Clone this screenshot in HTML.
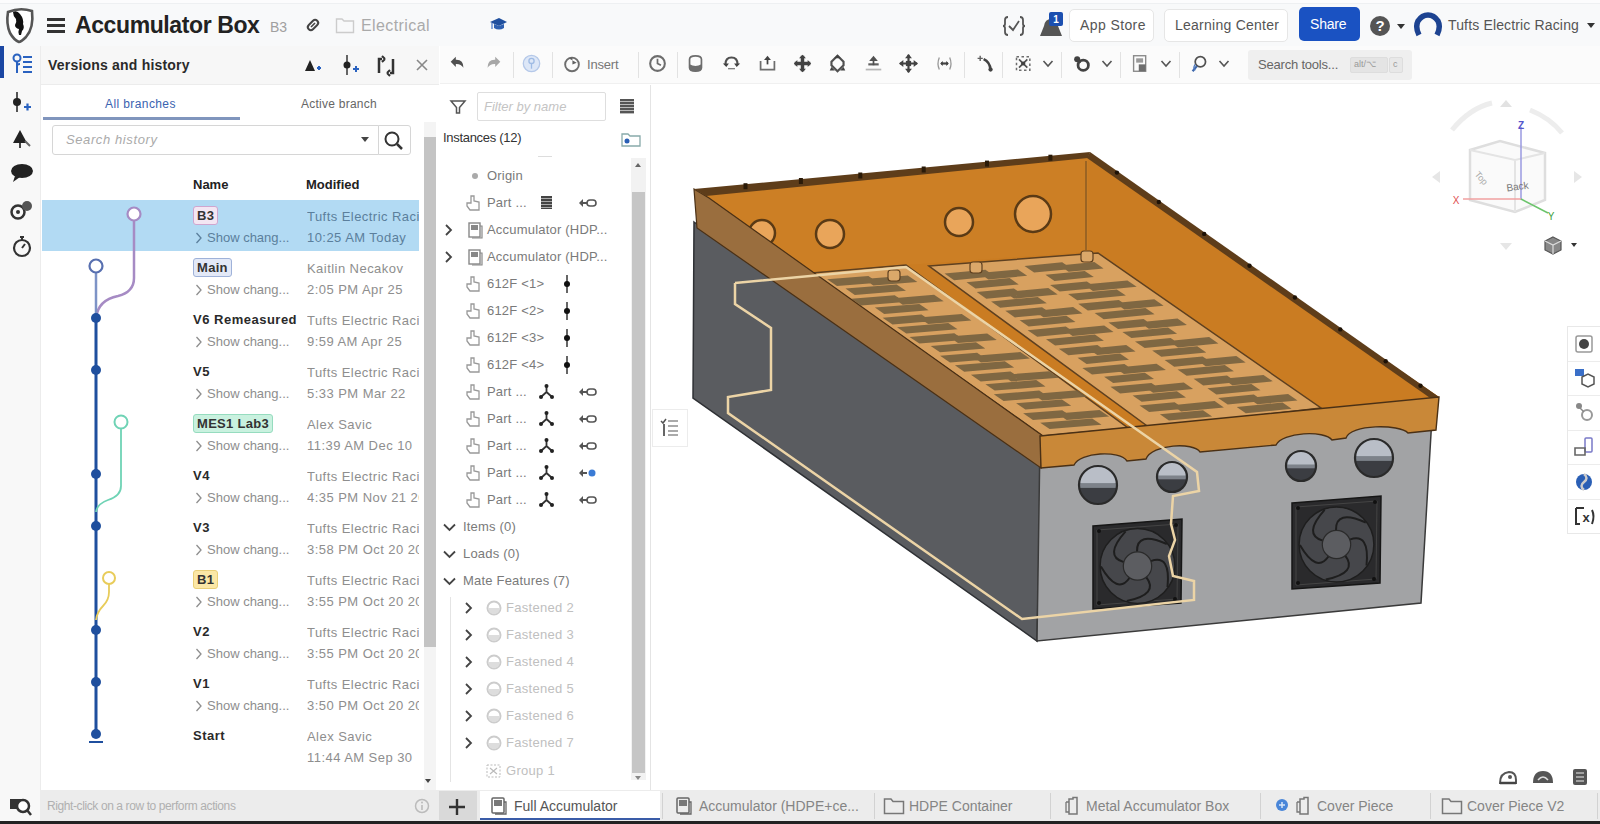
<!DOCTYPE html>
<html><head><meta charset="utf-8">
<style>
*{box-sizing:border-box;margin:0;padding:0}
html,body{width:1600px;height:824px;overflow:hidden;background:#fff;font-family:"Liberation Sans",sans-serif;color:#333}
.a{position:absolute}
#top{left:0;top:0;width:1600px;height:46px;background:#f8f9fa;border-top:3px solid #fcfcfd;box-shadow:inset 0 1px 0 #eef0f2}
#strip{left:0;top:46px;width:41px;height:775px;background:#f8f8f8;border-right:1px solid #ececec}
#lp{left:41px;top:46px;width:398px;height:744px;background:#fff}
#lphead{left:41px;top:46px;width:398px;height:39px;background:#f7f7f7;border-bottom:1px solid #ececec}
#tb{left:440px;top:46px;width:1160px;height:38px;background:#fbfbfb;border-bottom:1px solid #f0f0f0}
#inst{left:442px;top:85px;width:209px;height:705px;background:#fff;border-right:1px solid #e4e4e4}
#foot{left:41px;top:790px;width:1559px;height:31px;background:#ececec}
#blk{left:0;top:821px;width:1600px;height:3px;background:#222}
.t{position:absolute;white-space:nowrap}
</style></head><body>
<div id="top" class="a"></div>
<div id="strip" class="a"></div>
<div id="lp" class="a"></div>
<div id="lphead" class="a"></div>
<div id="tb" class="a"></div>
<div id="inst" class="a"></div>
<div id="foot" class="a"></div>
<div id="blk" class="a"></div>

<!-- top bar content -->
<svg class="a" style="left:0;top:0" width="45" height="46" viewBox="0 0 45 46"><path d="M8,12 Q20,7 32,11 Q34,28 26,37 Q21,42 19,42 Q14,40 10,33 Q6,24 8,12 Z" fill="#fff" stroke="#555" stroke-width="2.6"/><path d="M13,12 Q17,10 20,14 Q24,19 23,24 Q25,28 22,31 L21,35 L19,35 Q18,31 19,29 Q15,28 15,25 Q17,22 16,19 Q13,16 13,12 Z" fill="#111"/></svg>
<div class="a" style="left:47px;top:18px;width:18px;height:3px;background:#333"></div>
<div class="a" style="left:47px;top:24px;width:18px;height:3px;background:#333"></div>
<div class="a" style="left:47px;top:30px;width:18px;height:3px;background:#333"></div>
<div class="t" style="left:75px;top:12px;font-size:23px;font-weight:bold;color:#222;letter-spacing:-0.4px">Accumulator Box</div>
<div class="t" style="left:270px;top:19px;font-size:14px;color:#a0a0a0">B3</div>
<svg class="a" style="left:304px;top:16px" width="18" height="18" viewBox="0 0 18 18"><rect x="3" y="6" width="12" height="6" rx="3" transform="rotate(-45 9 9)" fill="none" stroke="#444" stroke-width="2"/><line x1="7" y1="11" x2="11" y2="7" stroke="#444" stroke-width="1.6"/></svg>
<svg class="a" style="left:335px;top:17px" width="20" height="17" viewBox="0 0 20 17"><path d="M1.5,2 L7,2 L9,4 L18.5,4 L18.5,15.5 L1.5,15.5 Z" fill="none" stroke="#ccc" stroke-width="1.4"/></svg>
<div class="t" style="left:361px;top:17px;font-size:16px;color:#aaa;letter-spacing:0.4px">Electrical</div>
<svg class="a" style="left:488px;top:16px" width="20" height="16" viewBox="0 0 20 16"><path d="M2,6 L11,2 L19,6 L11,10 Z" fill="#1f4f9e"/><path d="M6,8 L6,12 Q11,15 16,12 L16,8 L11,10 Z" fill="#2d5fb0"/><line x1="4" y1="7" x2="4" y2="13" stroke="#6a8fd0" stroke-width="1.5"/></svg>
<svg class="a" style="left:1002px;top:15px" width="24" height="22" viewBox="0 0 24 22"><path d="M6,2 Q3,2 3,5 L3,9 Q3,11 1,11 Q3,11 3,13 L3,17 Q3,20 6,20 M18,2 Q21,2 21,5 L21,9 Q21,11 23,11 Q21,11 21,13 L21,17 Q21,20 18,20" fill="none" stroke="#555" stroke-width="1.8"/><path d="M7,11 L11,15 L17,6" fill="none" stroke="#555" stroke-width="1.8"/></svg>
<svg class="a" style="left:1036px;top:10px" width="30" height="28" viewBox="0 0 30 28"><path d="M4,26 L8,16 Q9,9 15,9 Q21,9 22,16 L26,26 Z" fill="#555"/><rect x="13" y="2" width="14" height="14" rx="2" fill="#1b4fb0"/><text x="20" y="13" font-size="10" fill="#fff" text-anchor="middle" font-family="Liberation Sans" font-weight="bold">1</text></svg>
<div class="a" style="left:1069px;top:9px;width:85px;height:33px;border:1px solid #e6e6e6;border-radius:5px;background:#fff"></div>
<div class="t" style="left:1080px;top:17px;font-size:14px;color:#555;letter-spacing:0.4px">App Store</div>
<div class="a" style="left:1164px;top:9px;width:124px;height:33px;border:1px solid #e6e6e6;border-radius:5px;background:#fff"></div>
<div class="t" style="left:1175px;top:17px;font-size:14px;color:#555;letter-spacing:0.25px">Learning Center</div>
<div class="a" style="left:1299px;top:7px;width:61px;height:34px;border-radius:5px;background:#1a52c2"></div>
<div class="t" style="left:1310px;top:16px;font-size:14px;color:#fff;letter-spacing:-0.2px">Share</div>
<svg class="a" style="left:1369px;top:15px" width="22" height="22" viewBox="0 0 22 22"><circle cx="11" cy="11" r="10" fill="#555"/><text x="11" y="16" font-size="15" font-weight="bold" fill="#fff" text-anchor="middle" font-family="Liberation Sans">?</text></svg>
<div class="a" style="left:1397px;top:24px;width:0;height:0;border-left:4px solid transparent;border-right:4px solid transparent;border-top:5px solid #333"></div>
<svg class="a" style="left:1413px;top:12px" width="30" height="26" viewBox="0 0 30 26"><path d="M6,23 Q2,15 5,9 Q9,3 15,3 Q21,3 25,9 Q28,15 24,23" fill="none" stroke="#1d4391" stroke-width="5.5" stroke-linecap="butt"/></svg>
<div class="t" style="left:1448px;top:17px;font-size:14px;color:#555;letter-spacing:0.15px">Tufts Electric Racing</div>
<div class="a" style="left:1587px;top:23px;width:0;height:0;border-left:4px solid transparent;border-right:4px solid transparent;border-top:5px solid #333"></div>

<!-- left panel header -->
<div class="t" style="left:48px;top:57px;font-size:14px;font-weight:bold;color:#2a2a2a;letter-spacing:0.2px">Versions and history</div>
<div class="t" style="left:105px;top:97px;font-size:12px;color:#3a63b0;letter-spacing:0.4px">All branches</div>
<div class="t" style="left:301px;top:97px;font-size:12px;color:#666;letter-spacing:0.25px">Active branch</div>
<div class="a" style="left:43px;top:117px;width:197px;height:3px;background:#8095bd"></div>


<!-- left panel body -->
<div class="a" style="left:52px;top:125px;width:327px;height:30px;border:1px solid #d6d6d6;border-radius:3px 0 0 3px;background:#fff"></div>
<div class="t" style="left:66px;top:132px;font-size:13px;font-style:italic;color:#aaa;letter-spacing:0.6px">Search history</div>
<div class="a" style="left:361px;top:137px;width:0;height:0;border-left:4px solid transparent;border-right:4px solid transparent;border-top:5px solid #444"></div>
<div class="a" style="left:378px;top:125px;width:33px;height:30px;border:1px solid #d6d6d6;border-radius:0 3px 3px 0;background:#fff"></div>
<svg class="a" style="left:383px;top:130px" width="22" height="22" viewBox="0 0 22 22"><circle cx="9" cy="9" r="6.5" fill="none" stroke="#333" stroke-width="2"/><line x1="14" y1="14" x2="19" y2="19" stroke="#333" stroke-width="2.5"/></svg>
<div class="t" style="left:193px;top:177px;font-size:13px;font-weight:bold;color:#222">Name</div>
<div class="t" style="left:306px;top:177px;font-size:13px;font-weight:bold;color:#222">Modified</div>
<div class="a" style="left:424px;top:122px;width:12px;height:668px;background:#f4f4f4"></div><div class="a" style="left:425px;top:779px;width:0;height:0;border-left:3.5px solid transparent;border-right:3.5px solid transparent;border-top:4px solid #444"></div>
<div class="a" style="left:424px;top:137px;width:12px;height:510px;background:#c4c4c4"></div>
<div class="a" style="left:42px;top:200px;width:377px;height:51px;background:#b2daf3"></div>
<div class="t" style="left:193px;top:206px;height:19px;padding:0 3px;line-height:18px;font-size:13px;font-weight:bold;color:#333;letter-spacing:0.3px;background:#f3e6f3;border:1px solid #cfa6cf;border-radius:3px">B3</div>
<svg class="a" style="left:195px;top:232px" width="8" height="12" viewBox="0 0 8 12"><path d="M1.5,1 L6,6 L1.5,11" fill="none" stroke="#5b7f9c" stroke-width="1.3"/></svg>
<div class="t" style="left:207px;top:230px;font-size:13px;color:#5b7f9c">Show chang...</div>
<div class="t" style="left:307px;top:209px;width:112px;overflow:hidden;font-size:13px;letter-spacing:0.45px;color:#5b7f9c">Tufts Electric Racing</div>
<div class="t" style="left:307px;top:230px;width:112px;overflow:hidden;font-size:13px;letter-spacing:0.45px;color:#5b7f9c">10:25 AM Today</div>
<div class="t" style="left:193px;top:258px;height:19px;padding:0 3px;line-height:18px;font-size:13px;font-weight:bold;color:#333;letter-spacing:0.3px;background:#e3e9f7;border:1px solid #9fb2d9;border-radius:3px">Main</div>
<svg class="a" style="left:195px;top:284px" width="8" height="12" viewBox="0 0 8 12"><path d="M1.5,1 L6,6 L1.5,11" fill="none" stroke="#8e8e8e" stroke-width="1.3"/></svg>
<div class="t" style="left:207px;top:282px;font-size:13px;color:#8e8e8e">Show chang...</div>
<div class="t" style="left:307px;top:261px;width:112px;overflow:hidden;font-size:13px;letter-spacing:0.45px;color:#8e8e8e">Kaitlin Necakov</div>
<div class="t" style="left:307px;top:282px;width:112px;overflow:hidden;font-size:13px;letter-spacing:0.45px;color:#8e8e8e">2:05 PM Apr 25</div>
<div class="t" style="left:193px;top:312px;font-size:13px;font-weight:bold;color:#2a2a2a;letter-spacing:0.5px">V6 Remeasured</div>
<svg class="a" style="left:195px;top:336px" width="8" height="12" viewBox="0 0 8 12"><path d="M1.5,1 L6,6 L1.5,11" fill="none" stroke="#8e8e8e" stroke-width="1.3"/></svg>
<div class="t" style="left:207px;top:334px;font-size:13px;color:#8e8e8e">Show chang...</div>
<div class="t" style="left:307px;top:313px;width:112px;overflow:hidden;font-size:13px;letter-spacing:0.45px;color:#8e8e8e">Tufts Electric Racing</div>
<div class="t" style="left:307px;top:334px;width:112px;overflow:hidden;font-size:13px;letter-spacing:0.45px;color:#8e8e8e">9:59 AM Apr 25</div>
<div class="t" style="left:193px;top:364px;font-size:13px;font-weight:bold;color:#2a2a2a;letter-spacing:0.5px">V5</div>
<svg class="a" style="left:195px;top:388px" width="8" height="12" viewBox="0 0 8 12"><path d="M1.5,1 L6,6 L1.5,11" fill="none" stroke="#8e8e8e" stroke-width="1.3"/></svg>
<div class="t" style="left:207px;top:386px;font-size:13px;color:#8e8e8e">Show chang...</div>
<div class="t" style="left:307px;top:365px;width:112px;overflow:hidden;font-size:13px;letter-spacing:0.45px;color:#8e8e8e">Tufts Electric Racing</div>
<div class="t" style="left:307px;top:386px;width:112px;overflow:hidden;font-size:13px;letter-spacing:0.45px;color:#8e8e8e">5:33 PM Mar 22</div>
<div class="t" style="left:193px;top:414px;height:19px;padding:0 3px;line-height:18px;font-size:13px;font-weight:bold;color:#333;letter-spacing:0.3px;background:#c9f1df;border:1px solid #96dcbf;border-radius:3px">MES1 Lab3</div>
<svg class="a" style="left:195px;top:440px" width="8" height="12" viewBox="0 0 8 12"><path d="M1.5,1 L6,6 L1.5,11" fill="none" stroke="#8e8e8e" stroke-width="1.3"/></svg>
<div class="t" style="left:207px;top:438px;font-size:13px;color:#8e8e8e">Show chang...</div>
<div class="t" style="left:307px;top:417px;width:112px;overflow:hidden;font-size:13px;letter-spacing:0.45px;color:#8e8e8e">Alex Savic</div>
<div class="t" style="left:307px;top:438px;width:112px;overflow:hidden;font-size:13px;letter-spacing:0.45px;color:#8e8e8e">11:39 AM Dec 10</div>
<div class="t" style="left:193px;top:468px;font-size:13px;font-weight:bold;color:#2a2a2a;letter-spacing:0.5px">V4</div>
<svg class="a" style="left:195px;top:492px" width="8" height="12" viewBox="0 0 8 12"><path d="M1.5,1 L6,6 L1.5,11" fill="none" stroke="#8e8e8e" stroke-width="1.3"/></svg>
<div class="t" style="left:207px;top:490px;font-size:13px;color:#8e8e8e">Show chang...</div>
<div class="t" style="left:307px;top:469px;width:112px;overflow:hidden;font-size:13px;letter-spacing:0.45px;color:#8e8e8e">Tufts Electric Racing</div>
<div class="t" style="left:307px;top:490px;width:112px;overflow:hidden;font-size:13px;letter-spacing:0.45px;color:#8e8e8e">4:35 PM Nov 21 2023</div>
<div class="t" style="left:193px;top:520px;font-size:13px;font-weight:bold;color:#2a2a2a;letter-spacing:0.5px">V3</div>
<svg class="a" style="left:195px;top:544px" width="8" height="12" viewBox="0 0 8 12"><path d="M1.5,1 L6,6 L1.5,11" fill="none" stroke="#8e8e8e" stroke-width="1.3"/></svg>
<div class="t" style="left:207px;top:542px;font-size:13px;color:#8e8e8e">Show chang...</div>
<div class="t" style="left:307px;top:521px;width:112px;overflow:hidden;font-size:13px;letter-spacing:0.45px;color:#8e8e8e">Tufts Electric Racing</div>
<div class="t" style="left:307px;top:542px;width:112px;overflow:hidden;font-size:13px;letter-spacing:0.45px;color:#8e8e8e">3:58 PM Oct 20 2023</div>
<div class="t" style="left:193px;top:570px;height:19px;padding:0 3px;line-height:18px;font-size:13px;font-weight:bold;color:#333;letter-spacing:0.3px;background:#fbe7a6;border:1px solid #e9cf78;border-radius:3px">B1</div>
<svg class="a" style="left:195px;top:596px" width="8" height="12" viewBox="0 0 8 12"><path d="M1.5,1 L6,6 L1.5,11" fill="none" stroke="#8e8e8e" stroke-width="1.3"/></svg>
<div class="t" style="left:207px;top:594px;font-size:13px;color:#8e8e8e">Show chang...</div>
<div class="t" style="left:307px;top:573px;width:112px;overflow:hidden;font-size:13px;letter-spacing:0.45px;color:#8e8e8e">Tufts Electric Racing</div>
<div class="t" style="left:307px;top:594px;width:112px;overflow:hidden;font-size:13px;letter-spacing:0.45px;color:#8e8e8e">3:55 PM Oct 20 2023</div>
<div class="t" style="left:193px;top:624px;font-size:13px;font-weight:bold;color:#2a2a2a;letter-spacing:0.5px">V2</div>
<svg class="a" style="left:195px;top:648px" width="8" height="12" viewBox="0 0 8 12"><path d="M1.5,1 L6,6 L1.5,11" fill="none" stroke="#8e8e8e" stroke-width="1.3"/></svg>
<div class="t" style="left:207px;top:646px;font-size:13px;color:#8e8e8e">Show chang...</div>
<div class="t" style="left:307px;top:625px;width:112px;overflow:hidden;font-size:13px;letter-spacing:0.45px;color:#8e8e8e">Tufts Electric Racing</div>
<div class="t" style="left:307px;top:646px;width:112px;overflow:hidden;font-size:13px;letter-spacing:0.45px;color:#8e8e8e">3:55 PM Oct 20 2023</div>
<div class="t" style="left:193px;top:676px;font-size:13px;font-weight:bold;color:#2a2a2a;letter-spacing:0.5px">V1</div>
<svg class="a" style="left:195px;top:700px" width="8" height="12" viewBox="0 0 8 12"><path d="M1.5,1 L6,6 L1.5,11" fill="none" stroke="#8e8e8e" stroke-width="1.3"/></svg>
<div class="t" style="left:207px;top:698px;font-size:13px;color:#8e8e8e">Show chang...</div>
<div class="t" style="left:307px;top:677px;width:112px;overflow:hidden;font-size:13px;letter-spacing:0.45px;color:#8e8e8e">Tufts Electric Racing</div>
<div class="t" style="left:307px;top:698px;width:112px;overflow:hidden;font-size:13px;letter-spacing:0.45px;color:#8e8e8e">3:50 PM Oct 20 2023</div>
<div class="t" style="left:193px;top:728px;font-size:13px;font-weight:bold;color:#2a2a2a;letter-spacing:0.5px">Start</div>
<div class="t" style="left:307px;top:729px;width:112px;overflow:hidden;font-size:13px;letter-spacing:0.45px;color:#8e8e8e">Alex Savic</div>
<div class="t" style="left:307px;top:750px;width:112px;overflow:hidden;font-size:13px;letter-spacing:0.45px;color:#8e8e8e">11:44 AM Sep 30</div>
<svg class="a" style="left:0;top:0" width="440" height="790" viewBox="0 0 440 790">
<path d="M134,220 L134,278 Q134,292 118,296 Q98,300 96,318" fill="none" stroke="#a68bc4" stroke-width="2.5"/>
<line x1="96" y1="272" x2="96" y2="318" stroke="#7d93c6" stroke-width="2.5"/>
<line x1="96" y1="318" x2="96" y2="737" stroke="#1f4f9e" stroke-width="3"/>
<path d="M121,428 L121,486 Q121,496 108,500 Q97,504 96,512" fill="none" stroke="#6fd3b5" stroke-width="1.8"/>
<path d="M109,584 L109,592 Q109,600 103,606 Q97,612 96,620" fill="none" stroke="#e8cc5a" stroke-width="1.8"/>
<circle cx="134" cy="214" r="6.5" fill="#fff" stroke="#a68bc4" stroke-width="2.2"/>
<circle cx="96" cy="266" r="6.5" fill="#fff" stroke="#5870b0" stroke-width="2.2"/>
<circle cx="121" cy="422" r="6.5" fill="#fff" stroke="#6fd3b5" stroke-width="2"/>
<circle cx="109" cy="578" r="6" fill="#fff" stroke="#e8cc5a" stroke-width="2"/>
<g fill="#1f4f9e">
<circle cx="96" cy="318" r="5"/><circle cx="96" cy="370" r="5"/><circle cx="96" cy="474" r="5"/><circle cx="96" cy="526" r="5"/><circle cx="96" cy="630" r="5"/><circle cx="96" cy="682" r="5"/><circle cx="96" cy="734" r="5"/>
</g>
<line x1="89" y1="742" x2="103" y2="742" stroke="#1f4f9e" stroke-width="2"/>
</svg>


<!-- instances header -->
<svg class="a" style="left:449px;top:98px" width="18" height="18" viewBox="0 0 18 18"><path d="M2,3 L16,3 L10.5,9.5 L10.5,15 L7.5,15 L7.5,9.5 Z" fill="none" stroke="#555" stroke-width="1.5"/></svg>
<div class="a" style="left:477px;top:92px;width:129px;height:29px;border:1px solid #dedede;border-radius:2px;background:#fff"></div>
<div class="t" style="left:484px;top:99px;font-size:13px;font-style:italic;color:#c4c4c4">Filter by name</div>
<div class="a" style="left:620px;top:99px;width:14px;height:15px;background:repeating-linear-gradient(#555 0 2px,#bbb 2px 3px)"></div>
<div class="t" style="left:443px;top:130px;font-size:13px;color:#333;letter-spacing:-0.3px">Instances (12)</div>
<svg class="a" style="left:620px;top:130px" width="22" height="18" viewBox="0 0 22 18"><path d="M2,4 L8,4 L10,6 L20,6 L20,16 L2,16 Z" fill="none" stroke="#8aa" stroke-width="1.3"/><circle cx="7" cy="11" r="2.5" fill="#2a5fb5"/></svg>
<div class="a" style="left:538px;top:156px;width:14px;height:1px;background:#ddd"></div>
<div class="a" style="left:631px;top:158px;width:15px;height:622px;background:#f2f2f2"></div>
<div class="a" style="left:632px;top:192px;width:13px;height:581px;background:#c6c6c6"></div>
<div class="a" style="left:635px;top:163px;width:0;height:0;border-left:3.5px solid transparent;border-right:3.5px solid transparent;border-bottom:4px solid #666"></div>
<div class="a" style="left:635px;top:776px;width:0;height:0;border-left:3.5px solid transparent;border-right:3.5px solid transparent;border-top:4px solid #888"></div>
<div class="a" style="left:450px;top:597px;width:1px;height:185px;background:#e4e4e4"></div>
<div class="a" style="left:472px;top:173px;width:6px;height:6px;border-radius:3px;background:#aaa"></div><div class="t" style="left:487px;top:168px;font-size:13px;color:#7a7a7a;letter-spacing:0.2px">Origin</div>
<svg class="a" style="left:465px;top:194px" width="18" height="18" viewBox="0 0 18 18"><path d="M6,2 L9,2 L9,7 L14,8 L14,16 L5,16 L2,12 L2,9 L6,9 Z" fill="none" stroke="#999" stroke-width="1.3"/></svg><div class="t" style="left:487px;top:195px;font-size:13px;color:#7a7a7a;letter-spacing:0.2px">Part ...</div><div class="a" style="left:541px;top:196px;width:11px;height:13px;background:repeating-linear-gradient(#444 0 2px,#aaa 2px 3px)"></div><svg class="a" style="left:578px;top:198px" width="20" height="10" viewBox="0 0 20 10"><path d="M1,5 L5,1 L5,9 Z" fill="#555"/><path d="M5,5 L9,5" stroke="#555" stroke-width="2"/><rect x="9" y="2" width="9" height="6" rx="3" fill="none" stroke="#555" stroke-width="1.6"/></svg>
<svg class="a" style="left:444px;top:224px" width="10" height="12" viewBox="0 0 10 12"><path d="M2,1 L7,6 L2,11" fill="none" stroke="#444" stroke-width="1.8"/></svg><svg class="a" style="left:467px;top:221px" width="17" height="18" viewBox="0 0 17 18"><rect x="2" y="2" width="11" height="14" fill="none" stroke="#888" stroke-width="1.4"/><rect x="4" y="4" width="7" height="5" fill="#888"/><path d="M13,5 L15,5 L15,17 L5,17" fill="none" stroke="#888" stroke-width="1.2"/></svg><div class="t" style="left:487px;top:222px;font-size:13px;color:#7a7a7a;letter-spacing:0.2px">Accumulator (HDP...</div>
<svg class="a" style="left:444px;top:251px" width="10" height="12" viewBox="0 0 10 12"><path d="M2,1 L7,6 L2,11" fill="none" stroke="#444" stroke-width="1.8"/></svg><svg class="a" style="left:467px;top:248px" width="17" height="18" viewBox="0 0 17 18"><rect x="2" y="2" width="11" height="14" fill="none" stroke="#888" stroke-width="1.4"/><rect x="4" y="4" width="7" height="5" fill="#888"/><path d="M13,5 L15,5 L15,17 L5,17" fill="none" stroke="#888" stroke-width="1.2"/></svg><div class="t" style="left:487px;top:249px;font-size:13px;color:#7a7a7a;letter-spacing:0.2px">Accumulator (HDP...</div>
<svg class="a" style="left:465px;top:275px" width="18" height="18" viewBox="0 0 18 18"><path d="M6,2 L9,2 L9,7 L14,8 L14,16 L5,16 L2,12 L2,9 L6,9 Z" fill="none" stroke="#999" stroke-width="1.3"/></svg><div class="t" style="left:487px;top:276px;font-size:13px;color:#7a7a7a;letter-spacing:0.2px">612F &lt;1&gt;</div><svg class="a" style="left:562px;top:274px" width="10" height="20" viewBox="0 0 10 20"><line x1="5" y1="1" x2="5" y2="19" stroke="#333" stroke-width="1.5"/><circle cx="5" cy="10" r="3" fill="#111"/></svg>
<svg class="a" style="left:465px;top:302px" width="18" height="18" viewBox="0 0 18 18"><path d="M6,2 L9,2 L9,7 L14,8 L14,16 L5,16 L2,12 L2,9 L6,9 Z" fill="none" stroke="#999" stroke-width="1.3"/></svg><div class="t" style="left:487px;top:303px;font-size:13px;color:#7a7a7a;letter-spacing:0.2px">612F &lt;2&gt;</div><svg class="a" style="left:562px;top:301px" width="10" height="20" viewBox="0 0 10 20"><line x1="5" y1="1" x2="5" y2="19" stroke="#333" stroke-width="1.5"/><circle cx="5" cy="10" r="3" fill="#111"/></svg>
<svg class="a" style="left:465px;top:329px" width="18" height="18" viewBox="0 0 18 18"><path d="M6,2 L9,2 L9,7 L14,8 L14,16 L5,16 L2,12 L2,9 L6,9 Z" fill="none" stroke="#999" stroke-width="1.3"/></svg><div class="t" style="left:487px;top:330px;font-size:13px;color:#7a7a7a;letter-spacing:0.2px">612F &lt;3&gt;</div><svg class="a" style="left:562px;top:328px" width="10" height="20" viewBox="0 0 10 20"><line x1="5" y1="1" x2="5" y2="19" stroke="#333" stroke-width="1.5"/><circle cx="5" cy="10" r="3" fill="#111"/></svg>
<svg class="a" style="left:465px;top:356px" width="18" height="18" viewBox="0 0 18 18"><path d="M6,2 L9,2 L9,7 L14,8 L14,16 L5,16 L2,12 L2,9 L6,9 Z" fill="none" stroke="#999" stroke-width="1.3"/></svg><div class="t" style="left:487px;top:357px;font-size:13px;color:#7a7a7a;letter-spacing:0.2px">612F &lt;4&gt;</div><svg class="a" style="left:562px;top:355px" width="10" height="20" viewBox="0 0 10 20"><line x1="5" y1="1" x2="5" y2="19" stroke="#333" stroke-width="1.5"/><circle cx="5" cy="10" r="3" fill="#111"/></svg>
<svg class="a" style="left:465px;top:383px" width="18" height="18" viewBox="0 0 18 18"><path d="M6,2 L9,2 L9,7 L14,8 L14,16 L5,16 L2,12 L2,9 L6,9 Z" fill="none" stroke="#999" stroke-width="1.3"/></svg><div class="t" style="left:487px;top:384px;font-size:13px;color:#7a7a7a;letter-spacing:0.2px">Part ...</div><svg class="a" style="left:538px;top:383px" width="17" height="17" viewBox="0 0 17 17"><path d="M8.5,2 L8.5,9 L3,14 M8.5,9 L14,14" fill="none" stroke="#333" stroke-width="1.8"/><circle cx="8.5" cy="3" r="2" fill="#222"/><circle cx="3" cy="14" r="2" fill="#222"/><circle cx="14" cy="14" r="2" fill="#222"/></svg><svg class="a" style="left:578px;top:387px" width="20" height="10" viewBox="0 0 20 10"><path d="M1,5 L5,1 L5,9 Z" fill="#555"/><path d="M5,5 L9,5" stroke="#555" stroke-width="2"/><rect x="9" y="2" width="9" height="6" rx="3" fill="none" stroke="#555" stroke-width="1.6"/></svg>
<svg class="a" style="left:465px;top:410px" width="18" height="18" viewBox="0 0 18 18"><path d="M6,2 L9,2 L9,7 L14,8 L14,16 L5,16 L2,12 L2,9 L6,9 Z" fill="none" stroke="#999" stroke-width="1.3"/></svg><div class="t" style="left:487px;top:411px;font-size:13px;color:#7a7a7a;letter-spacing:0.2px">Part ...</div><svg class="a" style="left:538px;top:410px" width="17" height="17" viewBox="0 0 17 17"><path d="M8.5,2 L8.5,9 L3,14 M8.5,9 L14,14" fill="none" stroke="#333" stroke-width="1.8"/><circle cx="8.5" cy="3" r="2" fill="#222"/><circle cx="3" cy="14" r="2" fill="#222"/><circle cx="14" cy="14" r="2" fill="#222"/></svg><svg class="a" style="left:578px;top:414px" width="20" height="10" viewBox="0 0 20 10"><path d="M1,5 L5,1 L5,9 Z" fill="#555"/><path d="M5,5 L9,5" stroke="#555" stroke-width="2"/><rect x="9" y="2" width="9" height="6" rx="3" fill="none" stroke="#555" stroke-width="1.6"/></svg>
<svg class="a" style="left:465px;top:437px" width="18" height="18" viewBox="0 0 18 18"><path d="M6,2 L9,2 L9,7 L14,8 L14,16 L5,16 L2,12 L2,9 L6,9 Z" fill="none" stroke="#999" stroke-width="1.3"/></svg><div class="t" style="left:487px;top:438px;font-size:13px;color:#7a7a7a;letter-spacing:0.2px">Part ...</div><svg class="a" style="left:538px;top:437px" width="17" height="17" viewBox="0 0 17 17"><path d="M8.5,2 L8.5,9 L3,14 M8.5,9 L14,14" fill="none" stroke="#333" stroke-width="1.8"/><circle cx="8.5" cy="3" r="2" fill="#222"/><circle cx="3" cy="14" r="2" fill="#222"/><circle cx="14" cy="14" r="2" fill="#222"/></svg><svg class="a" style="left:578px;top:441px" width="20" height="10" viewBox="0 0 20 10"><path d="M1,5 L5,1 L5,9 Z" fill="#555"/><path d="M5,5 L9,5" stroke="#555" stroke-width="2"/><rect x="9" y="2" width="9" height="6" rx="3" fill="none" stroke="#555" stroke-width="1.6"/></svg>
<svg class="a" style="left:465px;top:464px" width="18" height="18" viewBox="0 0 18 18"><path d="M6,2 L9,2 L9,7 L14,8 L14,16 L5,16 L2,12 L2,9 L6,9 Z" fill="none" stroke="#999" stroke-width="1.3"/></svg><div class="t" style="left:487px;top:465px;font-size:13px;color:#7a7a7a;letter-spacing:0.2px">Part ...</div><svg class="a" style="left:538px;top:464px" width="17" height="17" viewBox="0 0 17 17"><path d="M8.5,2 L8.5,9 L3,14 M8.5,9 L14,14" fill="none" stroke="#333" stroke-width="1.8"/><circle cx="8.5" cy="3" r="2" fill="#222"/><circle cx="3" cy="14" r="2" fill="#222"/><circle cx="14" cy="14" r="2" fill="#222"/></svg><svg class="a" style="left:578px;top:468px" width="20" height="10" viewBox="0 0 20 10"><path d="M1,5 L5,1 L5,9 Z" fill="#555"/><path d="M5,5 L9,5" stroke="#555" stroke-width="2"/><circle cx="14" cy="5" r="3.5" fill="#3a7bd5"/></svg>
<svg class="a" style="left:465px;top:491px" width="18" height="18" viewBox="0 0 18 18"><path d="M6,2 L9,2 L9,7 L14,8 L14,16 L5,16 L2,12 L2,9 L6,9 Z" fill="none" stroke="#999" stroke-width="1.3"/></svg><div class="t" style="left:487px;top:492px;font-size:13px;color:#7a7a7a;letter-spacing:0.2px">Part ...</div><svg class="a" style="left:538px;top:491px" width="17" height="17" viewBox="0 0 17 17"><path d="M8.5,2 L8.5,9 L3,14 M8.5,9 L14,14" fill="none" stroke="#333" stroke-width="1.8"/><circle cx="8.5" cy="3" r="2" fill="#222"/><circle cx="3" cy="14" r="2" fill="#222"/><circle cx="14" cy="14" r="2" fill="#222"/></svg><svg class="a" style="left:578px;top:495px" width="20" height="10" viewBox="0 0 20 10"><path d="M1,5 L5,1 L5,9 Z" fill="#555"/><path d="M5,5 L9,5" stroke="#555" stroke-width="2"/><rect x="9" y="2" width="9" height="6" rx="3" fill="none" stroke="#555" stroke-width="1.6"/></svg>
<svg class="a" style="left:443px;top:523px" width="13" height="9" viewBox="0 0 13 9"><path d="M1,1.5 L6.5,7 L12,1.5" fill="none" stroke="#444" stroke-width="1.8"/></svg><div class="t" style="left:463px;top:519px;font-size:13px;color:#7a7a7a;letter-spacing:0.2px">Items (0)</div>
<svg class="a" style="left:443px;top:550px" width="13" height="9" viewBox="0 0 13 9"><path d="M1,1.5 L6.5,7 L12,1.5" fill="none" stroke="#444" stroke-width="1.8"/></svg><div class="t" style="left:463px;top:546px;font-size:13px;color:#7a7a7a;letter-spacing:0.2px">Loads (0)</div>
<svg class="a" style="left:443px;top:577px" width="13" height="9" viewBox="0 0 13 9"><path d="M1,1.5 L6.5,7 L12,1.5" fill="none" stroke="#444" stroke-width="1.8"/></svg><div class="t" style="left:463px;top:573px;font-size:13px;color:#7a7a7a;letter-spacing:0.2px">Mate Features (7)</div>
<svg class="a" style="left:464px;top:602px" width="10" height="12" viewBox="0 0 10 12"><path d="M2,1 L7,6 L2,11" fill="none" stroke="#444" stroke-width="1.8"/></svg>
<svg class="a" style="left:485px;top:599px" width="18" height="18" viewBox="0 0 18 18"><circle cx="9" cy="9" r="6.5" fill="none" stroke="#ccc" stroke-width="2"/><path d="M3,9 A6,6 0 0 0 15,9" fill="#ddd"/></svg><div class="t" style="left:506px;top:600px;font-size:13px;color:#c0c0c0;letter-spacing:0.3px">Fastened 2</div>
<svg class="a" style="left:464px;top:629px" width="10" height="12" viewBox="0 0 10 12"><path d="M2,1 L7,6 L2,11" fill="none" stroke="#444" stroke-width="1.8"/></svg>
<svg class="a" style="left:485px;top:626px" width="18" height="18" viewBox="0 0 18 18"><circle cx="9" cy="9" r="6.5" fill="none" stroke="#ccc" stroke-width="2"/><path d="M3,9 A6,6 0 0 0 15,9" fill="#ddd"/></svg><div class="t" style="left:506px;top:627px;font-size:13px;color:#c0c0c0;letter-spacing:0.3px">Fastened 3</div>
<svg class="a" style="left:464px;top:656px" width="10" height="12" viewBox="0 0 10 12"><path d="M2,1 L7,6 L2,11" fill="none" stroke="#444" stroke-width="1.8"/></svg>
<svg class="a" style="left:485px;top:653px" width="18" height="18" viewBox="0 0 18 18"><circle cx="9" cy="9" r="6.5" fill="none" stroke="#ccc" stroke-width="2"/><path d="M3,9 A6,6 0 0 0 15,9" fill="#ddd"/></svg><div class="t" style="left:506px;top:654px;font-size:13px;color:#c0c0c0;letter-spacing:0.3px">Fastened 4</div>
<svg class="a" style="left:464px;top:683px" width="10" height="12" viewBox="0 0 10 12"><path d="M2,1 L7,6 L2,11" fill="none" stroke="#444" stroke-width="1.8"/></svg>
<svg class="a" style="left:485px;top:680px" width="18" height="18" viewBox="0 0 18 18"><circle cx="9" cy="9" r="6.5" fill="none" stroke="#ccc" stroke-width="2"/><path d="M3,9 A6,6 0 0 0 15,9" fill="#ddd"/></svg><div class="t" style="left:506px;top:681px;font-size:13px;color:#c0c0c0;letter-spacing:0.3px">Fastened 5</div>
<svg class="a" style="left:464px;top:710px" width="10" height="12" viewBox="0 0 10 12"><path d="M2,1 L7,6 L2,11" fill="none" stroke="#444" stroke-width="1.8"/></svg>
<svg class="a" style="left:485px;top:707px" width="18" height="18" viewBox="0 0 18 18"><circle cx="9" cy="9" r="6.5" fill="none" stroke="#ccc" stroke-width="2"/><path d="M3,9 A6,6 0 0 0 15,9" fill="#ddd"/></svg><div class="t" style="left:506px;top:708px;font-size:13px;color:#c0c0c0;letter-spacing:0.3px">Fastened 6</div>
<svg class="a" style="left:464px;top:737px" width="10" height="12" viewBox="0 0 10 12"><path d="M2,1 L7,6 L2,11" fill="none" stroke="#444" stroke-width="1.8"/></svg>
<svg class="a" style="left:485px;top:734px" width="18" height="18" viewBox="0 0 18 18"><circle cx="9" cy="9" r="6.5" fill="none" stroke="#ccc" stroke-width="2"/><path d="M3,9 A6,6 0 0 0 15,9" fill="#ddd"/></svg><div class="t" style="left:506px;top:735px;font-size:13px;color:#c0c0c0;letter-spacing:0.3px">Fastened 7</div>
<svg class="a" style="left:485px;top:763px" width="17" height="16" viewBox="0 0 17 16"><rect x="2" y="2" width="13" height="12" fill="none" stroke="#bbb" stroke-width="1" stroke-dasharray="2,1.5"/><path d="M5,5 L12,11 M12,5 L5,11" stroke="#bbb" stroke-width="1.2"/></svg><div class="t" style="left:506px;top:763px;font-size:13px;color:#c0c0c0;letter-spacing:0.3px">Group 1</div>

<!-- toolbar -->
<svg class="a" style="left:448px;top:55px;opacity:0.85" width="19" height="17" viewBox="0 0 22 20"><path d="M3,8 L9,2 L9,5.5 Q18,5 18,15 Q15,10 9,10.5 L9,14 Z" fill="#333"/></svg>
<svg class="a" style="left:484px;top:55px;opacity:0.85" width="19" height="17" viewBox="0 0 22 20"><path d="M19,8 L13,2 L13,5.5 Q4,5 4,15 Q7,10 13,10.5 L13,14 Z" fill="#999"/></svg>
<div class="a" style="left:513px;top:52px;width:1px;height:26px;background:#e2e2e2"></div>
<svg class="a" style="left:522px;top:54px;opacity:0.85" width="19" height="19" viewBox="0 0 22 22"><circle cx="11" cy="11" r="9.5" fill="#d8e4f7" stroke="#a9c0e6" stroke-width="1.5"/><circle cx="11" cy="8" r="3" fill="none" stroke="#8fb0e0" stroke-width="1.5"/><line x1="11" y1="11" x2="11" y2="17" stroke="#8fb0e0" stroke-width="1.5"/></svg>
<div class="a" style="left:552px;top:52px;width:1px;height:26px;background:#e2e2e2"></div>
<svg class="a" style="left:563px;top:55px;opacity:0.85" width="18" height="18" viewBox="0 0 21 21"><circle cx="10.5" cy="11" r="8" fill="none" stroke="#555" stroke-width="2.2"/><path d="M7,4 L11,3 L11,11 L16,9 Z" fill="#444"/></svg>
<div class="t" style="left:587px;top:57px;font-size:13px;color:#777;letter-spacing:-0.2px">Insert</div>
<div class="a" style="left:638px;top:52px;width:1px;height:26px;background:#e2e2e2"></div>
<svg class="a" style="left:648px;top:54px;opacity:0.85" width="19" height="19" viewBox="0 0 22 22"><circle cx="11" cy="11" r="8.5" fill="none" stroke="#555" stroke-width="2.4"/><path d="M11,5.5 L11,11 L15,13" fill="none" stroke="#555" stroke-width="2"/></svg>
<div class="a" style="left:677px;top:52px;width:1px;height:26px;background:#e2e2e2"></div>
<svg class="a" style="left:687px;top:54px;opacity:0.85" width="17" height="19" viewBox="0 0 20 22"><path d="M3,6 Q3,2 10,2 Q17,2 17,6 L17,16 Q17,20 10,20 Q3,20 3,16 Z" fill="none" stroke="#555" stroke-width="2"/><path d="M3,12 Q10,16 17,12 L17,16 Q17,20 10,20 Q3,20 3,16 Z" fill="#555"/></svg>
<svg class="a" style="left:722px;top:54px;opacity:0.85" width="19" height="19" viewBox="0 0 22 22"><path d="M4,12 Q4,4 11,4 Q18,4 18,12" fill="none" stroke="#333" stroke-width="2.5"/><path d="M1,11 L5,15 L8,11 Z M14,11 L17,15 L21,11 Z" fill="#222"/><path d="M7,17 L15,17" stroke="#666" stroke-width="1.5"/></svg>
<svg class="a" style="left:758px;top:54px;opacity:0.85" width="19" height="19" viewBox="0 0 22 22"><path d="M3,8 L3,18 L19,18 L19,8" fill="none" stroke="#555" stroke-width="2"/><path d="M11,2 L7,7 L15,7 Z" fill="#222"/><line x1="11" y1="6" x2="11" y2="12" stroke="#222" stroke-width="2"/></svg>
<svg class="a" style="left:793px;top:54px;opacity:0.85" width="19" height="19" viewBox="0 0 22 22"><path d="M11,2 L11,20 M2,11 L20,11" stroke="#222" stroke-width="4"/><path d="M11,1 L7,5 L15,5 Z M11,21 L7,17 L15,17 Z M1,11 L5,7 L5,15 Z M21,11 L17,7 L17,15 Z" fill="#222"/></svg>
<svg class="a" style="left:828px;top:54px;opacity:0.85" width="19" height="19" viewBox="0 0 22 22"><path d="M11,2 L4,9 L4,13 L11,20 L18,13 L18,9 Z" fill="none" stroke="#333" stroke-width="2.5"/><path d="M11,1 L7,5 L15,5 Z M4,15 L2,19 L8,19 Z M18,15 L20,19 L14,19 Z" fill="#222"/></svg>
<svg class="a" style="left:864px;top:54px;opacity:0.85" width="19" height="19" viewBox="0 0 22 22"><path d="M11,2 L6,8 L16,8 Z" fill="#333"/><path d="M5,12 L17,12" stroke="#444" stroke-width="2.5"/><path d="M2,18 L20,18" stroke="#aaa" stroke-width="2"/><line x1="11" y1="7" x2="11" y2="13" stroke="#333" stroke-width="2"/></svg>
<svg class="a" style="left:899px;top:54px;opacity:0.85" width="19" height="19" viewBox="0 0 22 22"><path d="M11,1 L11,21 M1,11 L21,11" stroke="#222" stroke-width="2.5"/><path d="M11,0 L7,5 L15,5 Z M11,22 L7,17 L15,17 Z M0,11 L5,7 L5,15 Z M22,11 L17,7 L17,15 Z" fill="#222"/><rect x="8" y="8" width="6" height="6" fill="#222"/></svg>
<svg class="a" style="left:935px;top:54px;opacity:0.85" width="19" height="19" viewBox="0 0 22 22"><path d="M5,4 Q2,11 5,18 M17,4 Q20,11 17,18" fill="none" stroke="#888" stroke-width="1.5"/><path d="M7,11 L15,11" stroke="#222" stroke-width="2.5"/><path d="M6,11 L9,8 L9,14 Z M16,11 L13,8 L13,14 Z" fill="#222"/></svg>
<div class="a" style="left:964px;top:52px;width:1px;height:26px;background:#e2e2e2"></div>
<svg class="a" style="left:975px;top:54px;opacity:0.85" width="19" height="19" viewBox="0 0 22 22"><path d="M3,5 L9,5 M6,2 L6,8" stroke="#444" stroke-width="1.6"/><path d="M10,6 Q17,9 18,18" fill="none" stroke="#222" stroke-width="3"/><circle cx="18" cy="18" r="2.5" fill="#222"/></svg>
<div class="a" style="left:1002px;top:52px;width:1px;height:26px;background:#e2e2e2"></div>
<svg class="a" style="left:1014px;top:54px;opacity:0.85" width="20" height="19" viewBox="0 0 24 22"><rect x="3" y="3" width="16" height="16" fill="none" stroke="#555" stroke-width="1.8" stroke-dasharray="3,3"/><path d="M6,6 L16,16 M16,6 L6,16" stroke="#333" stroke-width="2"/><circle cx="11" cy="11" r="2.5" fill="#222"/></svg>
<svg class="a" style="left:1042px;top:59px" width="12" height="10" viewBox="0 0 12 10"><path d="M1.5,2 L6,7 L10.5,2" fill="none" stroke="#555" stroke-width="1.6"/></svg>
<div class="a" style="left:1061px;top:52px;width:1px;height:26px;background:#e2e2e2"></div>
<svg class="a" style="left:1072px;top:54px;opacity:0.85" width="19" height="19" viewBox="0 0 22 22"><circle cx="6" cy="6" r="3.5" fill="#222"/><circle cx="13" cy="13" r="6" fill="none" stroke="#222" stroke-width="3.2"/><line x1="6" y1="6" x2="10" y2="10" stroke="#222" stroke-width="2"/></svg>
<svg class="a" style="left:1101px;top:59px" width="12" height="10" viewBox="0 0 12 10"><path d="M1.5,2 L6,7 L10.5,2" fill="none" stroke="#555" stroke-width="1.6"/></svg>
<div class="a" style="left:1120px;top:52px;width:1px;height:26px;background:#e2e2e2"></div>
<svg class="a" style="left:1131px;top:54px;opacity:0.85" width="19" height="19" viewBox="0 0 22 22"><rect x="3" y="2" width="14" height="18" fill="none" stroke="#777" stroke-width="1.6"/><rect x="6" y="5" width="8" height="5" fill="#888"/><rect x="9" y="12" width="8" height="8" fill="#555"/></svg>
<svg class="a" style="left:1160px;top:59px" width="12" height="10" viewBox="0 0 12 10"><path d="M1.5,2 L6,7 L10.5,2" fill="none" stroke="#555" stroke-width="1.6"/></svg>
<div class="a" style="left:1179px;top:52px;width:1px;height:26px;background:#e2e2e2"></div>
<svg class="a" style="left:1190px;top:54px;opacity:0.85" width="19" height="19" viewBox="0 0 22 22"><circle cx="12" cy="9" r="6" fill="none" stroke="#333" stroke-width="2"/><path d="M8,14 L3,20" stroke="#1f4f9e" stroke-width="2.5"/><path d="M6,12 Q3,16 6,19" fill="none" stroke="#2a5fb5" stroke-width="1.5"/></svg>
<svg class="a" style="left:1218px;top:59px" width="12" height="10" viewBox="0 0 12 10"><path d="M1.5,2 L6,7 L10.5,2" fill="none" stroke="#555" stroke-width="1.6"/></svg>
<div class="a" style="left:1248px;top:50px;width:164px;height:30px;background:#efefef;border-radius:3px"></div>
<div class="t" style="left:1258px;top:57px;font-size:13px;color:#666;letter-spacing:-0.2px">Search tools...</div>
<div class="a" style="left:1350px;top:57px;width:38px;height:16px;background:#e4e4e4;border:1px solid #ddd;border-radius:2px"></div>
<div class="t" style="left:1354px;top:59px;font-size:9px;color:#999">alt/&#8997;</div>
<div class="a" style="left:1389px;top:57px;width:14px;height:16px;background:#e8e8e8;border:1px solid #ddd;border-radius:2px"></div>
<div class="t" style="left:1393px;top:59px;font-size:9px;color:#999">c</div>

<!-- left panel header icons -->
<svg class="a" style="left:302px;top:55px" width="22" height="20" viewBox="0 0 22 20"><path d="M3,16 L8,5 L13,16 Z" fill="#222"/><path d="M15,13 L19,13 M17,11 L17,15" stroke="#2a62c0" stroke-width="2"/></svg>
<svg class="a" style="left:339px;top:53px" width="22" height="24" viewBox="0 0 22 24"><line x1="8" y1="2" x2="8" y2="22" stroke="#555" stroke-width="1.8"/><circle cx="8" cy="12" r="3.5" fill="#222"/><path d="M14,16 L20,16 M17,13 L17,19" stroke="#2a62c0" stroke-width="2"/></svg>
<svg class="a" style="left:375px;top:55px" width="22" height="22" viewBox="0 0 22 22"><path d="M7,4 L4,4 L4,18 M15,18 L18,18 L18,4" fill="none" stroke="#333" stroke-width="2.5"/><path d="M4,4 L13,18 M9,4 L18,18" fill="none" stroke="#333" stroke-width="0"/><path d="M10,4 L7,1 M10,4 L7,7 M12,18 L15,15 M12,18 L15,21" stroke="#333" stroke-width="2"/></svg>
<svg class="a" style="left:414px;top:57px" width="16" height="16" viewBox="0 0 16 16"><path d="M3,3 L13,13 M13,3 L3,13" stroke="#888" stroke-width="1.6"/></svg>

<!-- icon strip -->
<div class="a" style="left:0;top:46px;width:4px;height:32px;background:#1b47a3"></div>
<svg class="a" style="left:10px;top:52px" width="24" height="24" viewBox="0 0 24 24"><circle cx="7" cy="6" r="3.5" fill="none" stroke="#2a62c0" stroke-width="2"/><path d="M7,10 L7,21 M7,14 Q7,12 10,12" fill="none" stroke="#2a62c0" stroke-width="2"/><path d="M13,5 L22,5 M13,10 L22,10 M13,15 L22,15 M13,20 L22,20" stroke="#2a62c0" stroke-width="1.8"/></svg>
<svg class="a" style="left:10px;top:90px" width="24" height="24" viewBox="0 0 24 24"><line x1="7" y1="2" x2="7" y2="22" stroke="#555" stroke-width="2"/><circle cx="7" cy="12" r="4" fill="#222"/><path d="M14,17 L21,17 M17.5,13.5 L17.5,20.5" stroke="#2a62c0" stroke-width="2.2"/></svg>
<svg class="a" style="left:10px;top:126px" width="24" height="24" viewBox="0 0 24 24"><path d="M3,17 L10,4 L17,17 Z" fill="#222"/><path d="M15,15 L20,20" stroke="#666" stroke-width="2"/><path d="M10,17 L10,22" stroke="#444" stroke-width="2"/></svg>
<svg class="a" style="left:9px;top:162px" width="26" height="22" viewBox="0 0 26 22"><ellipse cx="13" cy="9" rx="11" ry="7" fill="#222"/><path d="M6,14 L4,20 L11,15 Z" fill="#222"/></svg>
<svg class="a" style="left:9px;top:198px" width="26" height="24" viewBox="0 0 26 24"><circle cx="9" cy="14" r="6.5" fill="none" stroke="#333" stroke-width="2.5"/><circle cx="18" cy="8" r="5" fill="#555"/><circle cx="9" cy="14" r="2" fill="#333"/></svg>
<svg class="a" style="left:10px;top:234px" width="24" height="24" viewBox="0 0 24 24"><circle cx="12" cy="14" r="8" fill="none" stroke="#333" stroke-width="2.2"/><path d="M12,14 L15,10 M10,3 L14,3 M12,3 L12,6" stroke="#333" stroke-width="2"/></svg>

<!-- footer -->
<div class="t" style="left:47px;top:799px;font-size:12px;color:#b0b0b0;letter-spacing:-0.4px">Right-click on a row to perform actions</div>
<svg class="a" style="left:414px;top:798px" width="16" height="16" viewBox="0 0 16 16"><circle cx="8" cy="8" r="6.5" fill="none" stroke="#bbb" stroke-width="1.5"/><line x1="8" y1="7" x2="8" y2="12" stroke="#bbb" stroke-width="1.6"/><circle cx="8" cy="4.5" r="1" fill="#bbb"/></svg>
<svg class="a" style="left:8px;top:795px" width="26" height="22" viewBox="0 0 26 22"><path d="M2,4 L14,4 L14,14 L2,14 Z" fill="#333"/><circle cx="15" cy="11" r="6" fill="#fff" stroke="#333" stroke-width="2.5"/><line x1="19" y1="15" x2="23" y2="20" stroke="#333" stroke-width="2.5"/></svg>
<div class="a" style="left:439px;top:791px;width:38px;height:29px;background:#d9d9d9"></div>
<svg class="a" style="left:447px;top:797px" width="20" height="20" viewBox="0 0 20 20"><path d="M10,2 L10,18 M2,10 L18,10" stroke="#333" stroke-width="2.4"/></svg>
<div class="a" style="left:480px;top:791px;width:180px;height:29px;background:#fff;border-bottom:2px solid #3a5ca8"></div>
<div class="a" style="left:662px;top:793px;width:1px;height:26px;background:#d2d2d2"></div>
<div class="a" style="left:874px;top:793px;width:1px;height:26px;background:#d2d2d2"></div>
<div class="a" style="left:1050px;top:793px;width:1px;height:26px;background:#d2d2d2"></div>
<div class="a" style="left:1260px;top:793px;width:1px;height:26px;background:#d2d2d2"></div>
<div class="a" style="left:1430px;top:793px;width:1px;height:26px;background:#d2d2d2"></div>
<div class="a" style="left:1597px;top:793px;width:1px;height:26px;background:#d2d2d2"></div>
<svg class="a" style="left:489px;top:796px" width="20" height="20" viewBox="0 0 20 20"><rect x="3" y="2" width="12" height="15" rx="1" fill="none" stroke="#666" stroke-width="1.5"/><rect x="5" y="4" width="8" height="6" fill="#777"/><path d="M15,6 L17,6 L17,18 L6,18" fill="none" stroke="#666" stroke-width="1.3"/></svg>
<div class="t tab" style="left:514px;top:798px;font-size:14px;color:#555">Full Accumulator</div>
<svg class="a" style="left:674px;top:796px" width="20" height="20" viewBox="0 0 20 20"><rect x="3" y="2" width="12" height="15" rx="1" fill="none" stroke="#666" stroke-width="1.5"/><rect x="5" y="4" width="8" height="6" fill="#777"/><path d="M15,6 L17,6 L17,18 L6,18" fill="none" stroke="#666" stroke-width="1.3"/></svg>
<div class="t tab" style="left:699px;top:798px;font-size:14px;color:#858585">Accumulator (HDPE+ce...</div>
<svg class="a" style="left:883px;top:797px" width="22" height="18" viewBox="0 0 22 18"><path d="M1.5,2 L8,2 L10,4.5 L20.5,4.5 L20.5,16.5 L1.5,16.5 Z" fill="none" stroke="#777" stroke-width="1.5"/></svg>
<div class="t tab" style="left:909px;top:798px;font-size:14px;color:#858585">HDPE Container</div>
<svg class="a" style="left:1063px;top:796px" width="20" height="20" viewBox="0 0 20 20"><path d="M6,3 L10,3 L10,1.5 L14,1.5 L14,18 L6,18 Z" fill="none" stroke="#777" stroke-width="1.5"/><path d="M3,6 L6,6 M3,6 L3,16 L6,16" fill="none" stroke="#777" stroke-width="1.3"/></svg>
<div class="t tab" style="left:1086px;top:798px;font-size:14px;color:#858585">Metal Accumulator Box</div>
<svg class="a" style="left:1294px;top:796px" width="20" height="20" viewBox="0 0 20 20"><path d="M6,3 L10,3 L10,1.5 L14,1.5 L14,18 L6,18 Z" fill="none" stroke="#777" stroke-width="1.5"/><path d="M3,6 L6,6 M3,6 L3,16 L6,16" fill="none" stroke="#777" stroke-width="1.3"/></svg>
<div class="t tab" style="left:1317px;top:798px;font-size:14px;color:#858585">Cover Piece</div>
<svg class="a" style="left:1441px;top:797px" width="22" height="18" viewBox="0 0 22 18"><path d="M1.5,2 L8,2 L10,4.5 L20.5,4.5 L20.5,16.5 L1.5,16.5 Z" fill="none" stroke="#777" stroke-width="1.5"/></svg>
<div class="t tab" style="left:1467px;top:798px;font-size:14px;color:#858585">Cover Piece V2</div>
<svg class="a" style="left:1275px;top:798px" width="14" height="14" viewBox="0 0 14 14"><circle cx="7" cy="7" r="6" fill="#4a86d8"/><path d="M7,4 L7,10 M4,7 L10,7" stroke="#d8e6f8" stroke-width="1.5"/></svg>


<!-- nav cube -->
<svg class="a" style="left:1425px;top:95px" width="170" height="170" viewBox="1425 95 170 170">
<path d="M1452,130 Q1470,108 1492,103" fill="none" stroke="#ededed" stroke-width="5"/>
<path d="M1530,110 Q1550,118 1562,133" fill="none" stroke="#ededed" stroke-width="5"/>
<path d="M1500,107 L1506,100 L1512,107 Z" fill="#e2e2e2"/>
<path d="M1432,177 L1440,171 L1440,183 Z" fill="#e6e6e6"/>
<path d="M1582,177 L1574,171 L1574,183 Z" fill="#e6e6e6"/>
<path d="M1500,243 L1512,243 L1506,250 Z" fill="#e6e6e6"/>
<path d="M1470,150 L1500,141 L1545,153 L1545,200 L1515,212 L1470,200 Z" fill="#fafafa" stroke="#dedede" stroke-width="2.5"/>
<path d="M1470,150 L1515,160 L1545,153 M1515,160 L1515,212" fill="none" stroke="#e4e4e4" stroke-width="2"/>
<line x1="1521" y1="127" x2="1521" y2="200" stroke="#9a9ae0" stroke-width="1.5"/>
<text x="1521" y="129" font-size="10" fill="#5555cc" text-anchor="middle" font-family="Liberation Sans" font-weight="bold">Z</text>
<line x1="1463" y1="199" x2="1521" y2="199" stroke="#f0a0a0" stroke-width="1.5"/>
<text x="1456" y="204" font-size="10" fill="#e05050" text-anchor="middle" font-family="Liberation Sans">X</text>
<line x1="1521" y1="199" x2="1548" y2="213" stroke="#6cc46c" stroke-width="1.5"/>
<text x="1551" y="220" font-size="10" fill="#40a040" text-anchor="middle" font-family="Liberation Sans">Y</text>
<text x="1518" y="190" font-size="10" fill="#777" text-anchor="middle" font-family="Liberation Sans" transform="rotate(-8 1518 190)">Back</text>
<text x="1479" y="180" font-size="9" fill="#aaa" text-anchor="middle" font-family="Liberation Sans" transform="rotate(50 1479 180)">Top</text>
</svg>
<svg class="a" style="left:1543px;top:235px" width="20" height="20" viewBox="0 0 20 20"><path d="M10,2 L18,6 L18,15 L10,19 L2,15 L2,6 Z" fill="#888" stroke="#555" stroke-width="1.2"/><path d="M2,6 L10,10 L18,6 M10,10 L10,19" fill="none" stroke="#ddd" stroke-width="1.2"/></svg>
<div class="a" style="left:1571px;top:243px;width:0;height:0;border-left:3.5px solid transparent;border-right:3.5px solid transparent;border-top:4px solid #333"></div>

<!-- right icon column -->
<div class="a" style="left:1567px;top:326px;width:34px;height:208px;background:#fff;border:1px solid #e8e8e8;border-right:none"></div>
<div class="a" style="left:1568px;top:361px;width:32px;height:1px;background:#ececec"></div><div class="a" style="left:1568px;top:395px;width:32px;height:1px;background:#ececec"></div><div class="a" style="left:1568px;top:430px;width:32px;height:1px;background:#ececec"></div><div class="a" style="left:1568px;top:464px;width:32px;height:1px;background:#ececec"></div><div class="a" style="left:1568px;top:499px;width:32px;height:1px;background:#ececec"></div>
<svg class="a" style="left:1573px;top:333px" width="22" height="22" viewBox="0 0 22 22"><rect x="3" y="3" width="16" height="16" rx="2" fill="none" stroke="#999" stroke-width="1.5"/><circle cx="11" cy="11" r="5" fill="#444"/></svg>
<svg class="a" style="left:1573px;top:367px" width="22" height="22" viewBox="0 0 22 22"><rect x="2" y="2" width="9" height="7" fill="#3a6fc8"/><path d="M9,10 L15,7 L21,10 L21,17 L15,20 L9,17 Z" fill="#fff" stroke="#555" stroke-width="1.5"/></svg>
<svg class="a" style="left:1573px;top:401px" width="22" height="22" viewBox="0 0 22 22"><circle cx="6" cy="5" r="3" fill="#888"/><circle cx="14" cy="14" r="5" fill="none" stroke="#999" stroke-width="2"/><line x1="7" y1="7" x2="11" y2="11" stroke="#888" stroke-width="1.5"/></svg>
<svg class="a" style="left:1573px;top:436px" width="22" height="22" viewBox="0 0 22 22"><rect x="12" y="2" width="7" height="14" rx="1" fill="none" stroke="#7a7ac8" stroke-width="1.5"/><path d="M2,12 L12,12 L12,19 L2,19 Z" fill="none" stroke="#666" stroke-width="1.6"/></svg>
<svg class="a" style="left:1573px;top:471px" width="22" height="22" viewBox="0 0 22 22"><circle cx="11" cy="11" r="8" fill="#2a5fb5"/><path d="M11,3 Q16,7 11,11 Q6,15 11,19" fill="none" stroke="#ccc" stroke-width="2.5"/></svg>
<svg class="a" style="left:1573px;top:505px" width="24" height="22" viewBox="0 0 24 22"><path d="M3,3 L11,3 M3,3 L3,19 L7,19" fill="none" stroke="#333" stroke-width="2"/><text x="13" y="17" font-size="13" fill="#333" text-anchor="middle" font-family="Liberation Sans" font-weight="bold">x</text><path d="M19,5 Q22,11 19,19" fill="none" stroke="#333" stroke-width="2"/></svg>

<!-- viewport small icons -->
<div class="a" style="left:652px;top:409px;width:36px;height:38px;background:#fff;border:1px solid #ececec"></div>
<svg class="a" style="left:659px;top:418px" width="22" height="20" viewBox="0 0 22 20"><path d="M2,3 L4,5 L7,1" fill="none" stroke="#555" stroke-width="1.5"/><path d="M5,6 L5,18" stroke="#666" stroke-width="2"/><path d="M9,3 L19,3 M9,8 L19,8 M9,13 L19,13 M9,17 L19,17" stroke="#aaa" stroke-width="1.8"/></svg>
<svg class="a" style="left:1497px;top:768px" width="22" height="18" viewBox="0 0 22 18"><path d="M3,15 Q3,5 12,4 Q19,4 19,12 L19,15 Z" fill="none" stroke="#555" stroke-width="2"/><path d="M3,15 L19,15" stroke="#444" stroke-width="2.5"/><circle cx="13" cy="9" r="2" fill="#555"/></svg>
<svg class="a" style="left:1531px;top:768px" width="24" height="18" viewBox="0 0 24 18"><path d="M2,15 Q2,3 12,3 Q22,3 22,15 Z" fill="#555"/><path d="M7,12 Q12,6 17,12" fill="none" stroke="#ddd" stroke-width="1.5"/></svg>
<svg class="a" style="left:1570px;top:767px" width="20" height="20" viewBox="0 0 20 20"><rect x="3" y="2" width="14" height="16" rx="2" fill="#555"/><path d="M6,6 L14,6 M6,10 L14,10 M6,14 L14,14" stroke="#eee" stroke-width="1.2"/></svg>


<!--BOX-->
<svg class="a" style="left:0;top:0" width="1600" height="824" viewBox="0 0 1600 824">
<!-- left outer gray face -->
<polygon points="694,222 1041,466 1037,641 693,398" fill="#5a5c60" stroke="#2e3034" stroke-width="1.5"/>
<!-- front face -->
<polygon points="1040,440 1433,400 1421,603 1037,641" fill="#a2a3a5" stroke="#3a3a3a" stroke-width="1.5"/>
<!-- interior base -->
<polygon points="700,192 1088,156 1439,397 1040,436 810,272" fill="#cc7f25"/>
<!-- back wall inner -->
<polygon points="700,195 1088,158 1088,252 810,272" fill="#cc7f25"/>
<!-- right wall inner + floor -->
<polygon points="1088,158 1439,397 1040,436 810,272 1088,252" fill="#ca7c22"/>
<!-- left tray -->
<polygon points="812,273 906,265 1128,428 1043,436" fill="#d8a160" stroke="#5e4020" stroke-width="1.5"/>
<path d="M827.1,279.3 L868.4,276.0 L878.3,282.7 L837.0,286.0ZM863.8,279.1 L907.8,275.5 L917.4,282.0 L873.4,285.6ZM845.5,288.5 L896.6,284.4 L906.0,290.7 L854.8,294.9ZM851.3,298.8 L894.7,295.3 L904.6,301.9 L861.2,305.5ZM893.1,298.2 L934.1,294.8 L943.7,301.3 L902.7,304.7ZM874.9,307.6 L919.3,304.0 L928.6,310.3 L884.2,313.9ZM882.6,317.7 L921.5,314.5 L931.4,321.2 L892.5,324.4ZM918.6,317.5 L961.8,314.0 L971.4,320.5 L928.2,324.0ZM897.0,327.2 L948.3,323.0 L957.6,329.3 L906.3,333.5ZM909.5,336.9 L954.3,333.2 L964.2,339.9 L919.4,343.6ZM948.4,336.5 L987.2,333.4 L996.8,339.9 L958.0,343.0ZM930.7,345.9 L976.0,342.2 L985.3,348.5 L940.0,352.2ZM940.1,355.8 L977.1,352.8 L987.0,359.5 L950.0,362.5ZM971.4,356.1 L1020.3,352.1 L1029.9,358.6 L981.0,362.6ZM954.9,365.3 L1004.8,361.3 L1014.1,367.6 L964.2,371.7ZM970.9,374.8 L1010.5,371.5 L1020.4,378.2 L980.7,381.4ZM1001.6,375.0 L1049.2,371.2 L1058.8,377.7 L1011.2,381.5ZM985.4,384.3 L1036.2,380.1 L1045.5,386.5 L994.7,390.6ZM993.8,394.3 L1039.2,390.6 L1049.1,397.3 L1003.6,401.0ZM1032.6,393.9 L1077.5,390.3 L1087.1,396.8 L1042.2,400.4ZM1016.1,403.2 L1061.9,399.5 L1071.2,405.8 L1025.4,409.5ZM1023.1,413.3 L1062.2,410.2 L1072.1,416.9 L1033.0,420.0ZM1057.1,413.4 L1099.5,409.9 L1109.1,416.4 L1066.7,419.9ZM1040.2,422.7 L1092.2,418.4 L1101.5,424.7 L1049.6,429.0Z" fill="#76603f" opacity="0.9"/>
<!-- right tray -->
<polygon points="929,266 1098,253 1321,408 1150,428" fill="#d8a160" stroke="#5e4020" stroke-width="1.5"/>
<path d="M944.5,273.6 L985.4,269.7 L995.0,276.3 L954.1,280.2ZM979.0,273.1 L1017.9,269.4 L1027.2,275.8 L988.4,279.5ZM966.5,282.3 L1009.6,278.1 L1018.7,284.4 L975.5,288.5ZM1024.5,266.0 L1062.2,262.3 L1071.8,268.9 L1034.1,272.6ZM1059.3,265.4 L1094.3,262.0 L1103.6,268.5 L1068.7,271.8ZM1045.4,274.7 L1084.7,270.9 L1093.8,277.1 L1054.5,280.9ZM976.7,292.1 L1013.9,288.5 L1023.6,295.1 L986.3,298.7ZM1004.5,292.2 L1048.3,288.0 L1057.7,294.4 L1013.9,298.6ZM991.1,301.4 L1037.7,297.0 L1046.8,303.2 L1000.2,307.7ZM1050.1,285.0 L1086.9,281.5 L1096.6,288.1 L1059.7,291.6ZM1083.6,284.6 L1127.4,280.4 L1136.7,286.8 L1092.9,291.0ZM1068.1,294.0 L1116.8,289.4 L1125.9,295.6 L1077.2,300.3ZM1005.3,310.8 L1042.0,307.3 L1051.7,313.9 L1014.9,317.4ZM1034.1,310.9 L1073.1,307.1 L1082.5,313.5 L1043.4,317.3ZM1019.6,320.2 L1066.4,315.7 L1075.5,321.9 L1028.7,326.4ZM1078.2,303.8 L1118.8,299.9 L1128.5,306.5 L1087.8,310.4ZM1114.9,303.1 L1154.3,299.3 L1163.6,305.7 L1124.3,309.5ZM1094.6,313.0 L1145.5,308.1 L1154.6,314.3 L1103.7,319.2ZM1027.6,330.2 L1065.8,326.5 L1075.4,333.1 L1037.2,336.8ZM1063.2,329.6 L1104.2,325.6 L1113.5,332.1 L1072.6,336.0ZM1046.0,339.2 L1094.9,334.5 L1103.9,340.7 L1055.1,345.4ZM1108.4,322.4 L1143.6,319.1 L1153.2,325.7 L1118.0,329.0ZM1139.4,322.3 L1177.5,318.6 L1186.9,325.0 L1148.8,328.7ZM1122.4,331.9 L1168.0,327.5 L1177.1,333.7 L1131.4,338.1ZM1058.8,348.7 L1097.4,345.0 L1107.0,351.6 L1068.4,355.3ZM1087.9,348.7 L1126.2,345.0 L1135.6,351.5 L1097.3,355.1ZM1077.5,357.7 L1119.9,353.6 L1129.0,359.8 L1086.6,363.9ZM1135.0,341.4 L1170.6,338.0 L1180.3,344.6 L1144.7,348.0ZM1168.6,341.0 L1209.1,337.1 L1218.4,343.5 L1178.0,347.4ZM1152.2,350.5 L1197.2,346.2 L1206.3,352.4 L1161.3,356.7ZM1082.3,368.0 L1124.4,363.9 L1134.0,370.6 L1092.0,374.6ZM1114.6,367.7 L1156.5,363.7 L1165.9,370.1 L1124.0,374.1ZM1104.1,376.7 L1144.9,372.7 L1154.0,379.0 L1113.2,382.9ZM1164.6,360.1 L1202.6,356.4 L1212.2,363.0 L1174.2,366.7ZM1196.4,359.8 L1236.3,356.0 L1245.7,362.4 L1205.7,366.2ZM1177.5,369.6 L1224.8,365.0 L1233.9,371.3 L1186.6,375.8ZM1110.4,386.8 L1151.4,382.9 L1161.1,389.5 L1120.1,393.4ZM1143.8,386.4 L1183.8,382.6 L1193.1,389.0 L1153.1,392.8ZM1132.6,395.4 L1176.9,391.2 L1186.0,397.4 L1141.7,401.7ZM1193.6,378.8 L1227.0,375.6 L1236.6,382.2 L1203.2,385.4ZM1223.0,378.8 L1263.5,374.9 L1272.8,381.3 L1232.3,385.2ZM1207.4,388.2 L1251.4,384.0 L1260.5,390.2 L1216.4,394.5ZM1139.5,405.5 L1174.6,402.2 L1184.2,408.8 L1149.1,412.1ZM1171.8,405.2 L1214.6,401.1 L1223.9,407.5 L1181.1,411.6ZM1159.9,414.3 L1203.0,410.2 L1212.1,416.4 L1168.9,420.6ZM1218.1,398.0 L1253.8,394.5 L1263.4,401.1 L1227.7,404.6ZM1248.0,397.9 L1288.1,394.0 L1297.5,400.5 L1257.3,404.3ZM1236.7,406.9 L1282.5,402.5 L1291.6,408.8 L1245.8,413.2Z" fill="#76603f" opacity="0.9"/>
<!-- holes back wall -->
<circle cx="830" cy="234" r="14" fill="#e9a55a" stroke="#5a3a15" stroke-width="2.5"/>
<circle cx="959" cy="222" r="14" fill="#e9a55a" stroke="#5a3a15" stroke-width="2.5"/>
<circle cx="1033" cy="214" r="18" fill="#e9a55a" stroke="#5a3a15" stroke-width="2.5"/>
<circle cx="762" cy="233" r="13" fill="#e9a55a" stroke="#5a3a15" stroke-width="2.5"/>
<!-- left rim brown strip -->
<polygon points="694,189 709,198 1043,436 1041,468 697,228" fill="#9a6e3e" stroke="#4a3015" stroke-width="1.2"/>
<!-- back rim top -->
<polygon points="694,189 1090,152 1088,158 706,196" fill="#5e3d1a"/>
<!-- right rim top -->
<polygon points="1090,152 1439,397 1433,400 1087,158" fill="#5e3d1a"/>
<line x1="1086" y1="161" x2="1086" y2="250" stroke="#6b4a22" stroke-width="1"/>
<rect x="743.5" y="183.2" width="4" height="6" fill="#2a1a08"/>
<rect x="798.9" y="178.0" width="4" height="6" fill="#2a1a08"/>
<rect x="858.3" y="172.5" width="4" height="6" fill="#2a1a08"/>
<rect x="921.7" y="166.5" width="4" height="6" fill="#2a1a08"/>
<rect x="985.0" y="160.6" width="4" height="6" fill="#2a1a08"/>
<rect x="1048.4" y="154.7" width="4" height="6" fill="#2a1a08"/>
<circle cx="1116.9" cy="172.6" r="2.2" fill="#1e1206"/>
<circle cx="1158.8" cy="202.0" r="2.2" fill="#1e1206"/>
<circle cx="1204.2" cy="233.9" r="2.2" fill="#1e1206"/>
<circle cx="1249.5" cy="265.7" r="2.2" fill="#1e1206"/>
<circle cx="1294.9" cy="297.5" r="2.2" fill="#1e1206"/>
<circle cx="1340.3" cy="329.4" r="2.2" fill="#1e1206"/>
<circle cx="1385.7" cy="361.2" r="2.2" fill="#1e1206"/>
<circle cx="1420.5" cy="385.8" r="2.2" fill="#1e1206"/>
<rect x="888" y="270" width="12" height="11" rx="3" fill="#dba86a" stroke="#5e4020" stroke-width="1.2"/>
<rect x="970" y="262" width="12" height="11" rx="3" fill="#dba86a" stroke="#5e4020" stroke-width="1.2"/>
<rect x="1081" y="251" width="12" height="11" rx="3" fill="#dba86a" stroke="#5e4020" stroke-width="1.2"/>
<!-- front rim band -->
<path d="M1040,436 L1439,397 L1436,430 L1408,433 C1400,424 1350,424 1346,438 L1332,440 C1325,430 1282,432 1276,445 L1200,452 C1194,442 1152,444 1146,459 L1127,461 C1120,450 1080,452 1074,465 L1041,468 Z" fill="#c98838" stroke="#4a3015" stroke-width="1.4"/>
<!-- front holes -->
<defs></defs>
<clipPath id="h1098"><circle cx="1098" cy="485" r="19"/></clipPath>
<g clip-path="url(#h1098)"><rect x="1079" y="466" width="38" height="38" fill="#3b3d42"/><rect x="1079" y="466" width="38" height="18.1" fill="#b9bec7"/><rect x="1079" y="483.1" width="38" height="4.8" fill="#7d828a"/></g>
<circle cx="1098" cy="485" r="19" fill="none" stroke="#2a2a2a" stroke-width="2.2"/>
<clipPath id="h1172"><circle cx="1172" cy="477" r="15"/></clipPath>
<g clip-path="url(#h1172)"><rect x="1157" y="462" width="30" height="30" fill="#3b3d42"/><rect x="1157" y="462" width="30" height="14.2" fill="#b9bec7"/><rect x="1157" y="475.5" width="30" height="3.8" fill="#7d828a"/></g>
<circle cx="1172" cy="477" r="15" fill="none" stroke="#2a2a2a" stroke-width="2.2"/>
<clipPath id="h1301"><circle cx="1301" cy="466" r="15"/></clipPath>
<g clip-path="url(#h1301)"><rect x="1286" y="451" width="30" height="30" fill="#3b3d42"/><rect x="1286" y="451" width="30" height="14.2" fill="#b9bec7"/><rect x="1286" y="464.5" width="30" height="3.8" fill="#7d828a"/></g>
<circle cx="1301" cy="466" r="15" fill="none" stroke="#2a2a2a" stroke-width="2.2"/>
<clipPath id="h1374"><circle cx="1374" cy="458" r="19"/></clipPath>
<g clip-path="url(#h1374)"><rect x="1355" y="439" width="38" height="38" fill="#3b3d42"/><rect x="1355" y="439" width="38" height="18.1" fill="#b9bec7"/><rect x="1355" y="456.1" width="38" height="4.8" fill="#7d828a"/></g>
<circle cx="1374" cy="458" r="19" fill="none" stroke="#2a2a2a" stroke-width="2.2"/>
<!-- fans -->
<polygon points="1093,526 1182,519 1181,603 1093,609" fill="#2a2a2c" stroke="#161616" stroke-width="1.5"/>
<polygon points="1097,530 1178,524 1177,599 1097,605" fill="none" stroke="#444" stroke-width="1"/>
<circle cx="1137.5" cy="566.0" r="37.4" fill="#46474b" stroke="#1e1e1e" stroke-width="1.5"/>
<path d="M1150.8,561.1 Q1170.9,553.9 1167.5,587.0 M1146.2,577.2 Q1159.4,594.0 1126.8,601.0 M1129.6,577.8 Q1117.6,595.4 1100.9,566.6 M1123.8,562.1 Q1103.4,556.2 1125.6,531.4 M1137.0,551.8 Q1136.3,530.5 1166.8,544.0 " fill="none" stroke="#1e1e1e" stroke-width="2"/>
<circle cx="1137.5" cy="566.0" r="14.2" fill="#5c5d61" stroke="#2a2a2a" stroke-width="1.2"/>
<circle cx="1099" cy="531" r="2" fill="#111"/><circle cx="1176" cy="525" r="2" fill="#111"/><circle cx="1099" cy="603" r="2" fill="#111"/><circle cx="1175" cy="599" r="2" fill="#111"/>
<polygon points="1292,503 1381,496 1380,583 1292,589" fill="#2a2a2c" stroke="#161616" stroke-width="1.5"/>
<polygon points="1296,507 1377,501 1376,579 1296,585" fill="none" stroke="#444" stroke-width="1"/>
<circle cx="1336.5" cy="544.5" r="37.4" fill="#46474b" stroke="#1e1e1e" stroke-width="1.5"/>
<path d="M1349.8,539.6 Q1369.9,532.4 1366.5,565.5 M1345.2,555.7 Q1358.4,572.5 1325.8,579.5 M1328.6,556.3 Q1316.6,573.9 1299.9,545.1 M1322.8,540.6 Q1302.4,534.7 1324.6,509.9 M1336.0,530.3 Q1335.3,509.0 1365.8,522.5 " fill="none" stroke="#1e1e1e" stroke-width="2"/>
<circle cx="1336.5" cy="544.5" r="14.2" fill="#5c5d61" stroke="#2a2a2a" stroke-width="1.2"/>
<circle cx="1298" cy="508" r="2" fill="#111"/><circle cx="1375" cy="502" r="2" fill="#111"/><circle cx="1298" cy="583" r="2" fill="#111"/><circle cx="1374" cy="579" r="2" fill="#111"/>
<!-- selection outline -->
<polyline points="735,283 906,267 1197,472 1199,491 1173,496 1171,524 1175,540 1169,556 1173,576 1194,581 1194,600 1022,619 728,413 728,397 771,390 771,328 735,304 735,283" fill="none" stroke="#ecd4a6" stroke-width="2.5"/>
</svg>
<!--/BOX-->
</body></html>
